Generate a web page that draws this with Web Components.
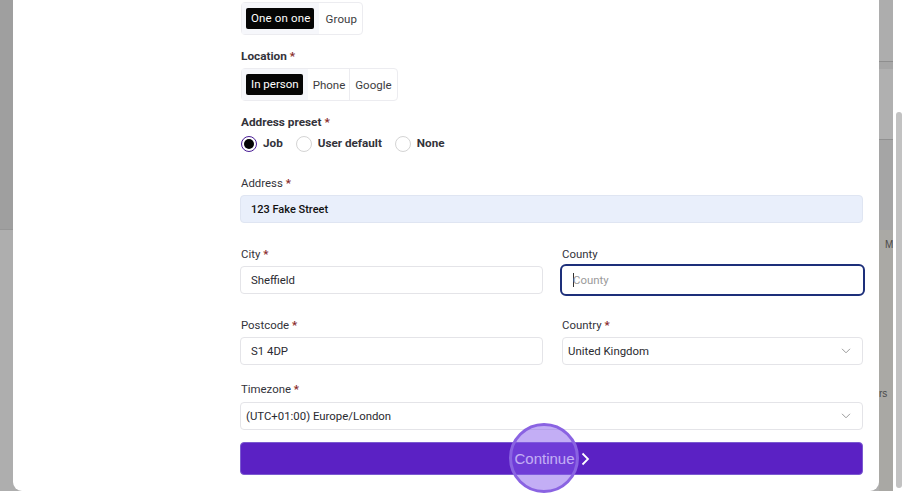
<!DOCTYPE html>
<html>
<head>
<meta charset="utf-8">
<style>
	html, body { margin: 0; padding: 0; background: #fff; }
	body { width: 904px; height: 504px; overflow: hidden; font-family: Roboto, "Liberation Sans", sans-serif; }
	.two { display: grid; grid-template-columns: 303px 301px; column-gap: 19px; margin-top: 24px; }
</style>
</head>
<body>

<template id="app-screen-tpl">
	<style>
		:host { display: flex; width: 904px; height: 504px; background: #fff; position: relative; }
		.backdrop { display: flex; width: 893px; height: 491px; background: #aeaeae; }
		.side { display: flex; flex-direction: column; flex: none; overflow: hidden; }
		.left { width: 13px; }
		.right { width: 14px; color: #4a4a4a; font: 10px "Liberation Sans", sans-serif; }
		.b { flex: none; box-sizing: border-box; }
		.modal { flex: 1; min-width: 0; background: #fff; border-radius: 0 0 9px 9px; }
		.bar { flex: none; width: 11px; height: 491px; display: flex; flex-direction: column; padding-top: 112px; box-sizing: border-box; align-items: flex-end; }
		.thumb { width: 6px; height: 376px; margin-right: 2px; background: #c2c2c2; border-radius: 3px; }
		.m { background: #aaa9a5; padding-top: 9px; height: 150px; padding-left: 6px; }
		.m2 { height: 111px; background: #a9a8a4; padding-top: 8px; line-height: 12px; white-space: nowrap; }
	</style>
	<div class="backdrop">
		<div class="side left">
			<div class="b" style="height:230px;background:#9f9f9f;border-bottom:1px solid #969696"></div>
			<div class="b" style="height:261px;background:#aeaeae"></div>
		</div>
		<div class="modal"><slot></slot></div>
		<div class="side right">
			<div class="b" style="height:61px;background:#adadad"></div>
			<div class="b" style="height:8px;background:#a6a6a6;border-top:1px solid #8e8e8e"></div>
			<div class="b" style="height:70px;background:#b0b0b0"></div>
			<div class="b" style="height:91px;background:#a5a5a5;border-top:1px solid #909090"></div>
			<div class="b m">M</div>
			<div class="b m2">rs</div>
		</div>
	</div>
	<div class="bar"><div class="thumb"></div></div>
	<slot name="overlay"></slot>
</template>

<template id="job-form-tpl">
	<style>
		:host { display: flex; flex-direction: column; box-sizing: border-box; height: 100%; padding: 2px 16px 0 227px; }
	</style>
	<slot></slot>
</template>

<template id="seg-group-tpl">
	<style>
		:host { display: inline-flex; align-self: flex-start; box-sizing: border-box; height: 33px; margin-left: 1px; border: 1px solid #ececf0; border-radius: 4px; background: #fff; }
	</style>
	<slot></slot>
</template>

<template id="seg-item-tpl">
	<style>
		:host { display: flex; align-items: center; padding: 0 5px; font-size: 11.5px; color: #3c3c40; border-left: 1px solid #ececf0; }
		:host([first]) { border-left: 0; background: #f6f7fb; padding: 0 4px 0 4px; }
		:host([first]) span { margin-right: 1px; }
		span { display: block; }
		:host([active]) span { background: #050505; color: #fff; padding: 0 4px 0 5px; line-height: 21px; border-radius: 2px; }
	</style>
	<span><slot></slot></span>
</template>

<template id="form-label-tpl">
	<style>
		:host { display: block; height: 16px; line-height: 14px; margin-left: 1px; font-size: 11.4px; color: #33333a; }
		:host([bold]) { font-size: 11.8px; font-weight: 700; }
		i { font-style: normal; font-weight: 700; color: #8a2b2b; }
	</style>
	<slot></slot><i id="req"> *</i>
</template>

<template id="radio-row-tpl">
	<style>
		:host { display: flex; align-items: flex-start; height: 18px; gap: 13px; margin-left: 1px; }
	</style>
	<slot></slot>
</template>

<template id="radio-opt-tpl">
	<style>
		:host { display: flex; gap: 6px; font-size: 11.7px; font-weight: 700; color: #33333a; line-height: 14px; }
		.dot { box-sizing: border-box; width: 16px; height: 16px; border-radius: 50%; border: 1.5px solid #d4d4d4; background: #fff; flex: none; }
		:host([checked]) .dot { border: 1.5px solid #4a1d96; padding: 2px; background: #050505 content-box; }
	</style>
	<div class="dot"></div><span><slot></slot></span>
</template>

<template id="text-box-tpl">
	<style>
		:host { display: flex; align-items: center; box-sizing: border-box; height: 28px; padding: 0 10px; margin-top: 3px; border: 1px solid #e4e4e8; border-radius: 4px; background: #fff; font-size: 11.4px; color: #2a2a30; position: relative; }
		:host([filled]) { background: #e9effb; border-color: #dfe5f2; font-size: 11px; font-weight: 500; color: #111; }
		:host([focused]) { outline: 2px solid #1d2f7a; border-color: #fff; color: #9a9a9a; }
		:host([select]) { padding: 0 11px 0 5px; justify-content: space-between; }
		:host([focused]) b { width: 1px; height: 14px; background: #333; flex: none; margin-right: -1px; }
		svg { flex: none; }
		.t { flex: 1; }
	</style>
	<b></b><span class="t"><slot></slot></span>
	<svg id="chev" width="10" height="6" viewBox="0 0 10 6" fill="none" stroke="#9a9a9a" stroke-width="1"><path d="M1 .8 5 4.8 9 .8"/></svg>
</template>

<template id="go-button-tpl">
	<style>
		:host { display: flex; align-items: center; justify-content: center; gap: 6px; box-sizing: border-box; height: 33px; margin-top: 12px; padding-left: 1px; background: #5b21c4; border: 1px solid #7b5ad0; border-radius: 4px; color: #fff; font: 15px "Liberation Sans", sans-serif; }
	</style>
	<span><slot></slot></span>
	<svg width="9" height="14" viewBox="0 0 9 14" fill="none" stroke="#fff" stroke-width="1.8"><path d="M1.5 1.5 7 7 1.5 12.5"/></svg>
</template>

<template id="click-spot-tpl">
	<style>
		:host { display: block; position: absolute; left: 509px; top: 423px; width: 70px; height: 70px; box-sizing: border-box; border-radius: 50%; border: 3px solid #8a63e2; background: rgba(132,90,235,.49); }
	</style>
</template>

<app-screen>
	<job-form>
		<seg-group style="letter-spacing:.15px">
			<seg-item first active>One on one</seg-item>
			<seg-item style="border-left:0;padding-left:6px">Group</seg-item>
		</seg-group>

		<form-label bold required style="margin-top:14px">Location</form-label>
		<seg-group style="margin-top:3px">
			<seg-item first active>In person</seg-item>
			<seg-item style="border-left:0;padding-right:4px">Phone</seg-item>
			<seg-item>Google</seg-item>
		</seg-group>

		<form-label bold required style="margin-top:14px">Address preset</form-label>
		<radio-row style="margin-top:5px">
			<radio-opt checked>Job</radio-opt>
			<radio-opt>User default</radio-opt>
			<radio-opt>None</radio-opt>
		</radio-row>

		<form-label required style="margin-top:22px">Address</form-label>
		<text-box filled>123 Fake Street</text-box>

		<div class="two">
			<div>
				<form-label required>City</form-label>
				<text-box>Sheffield</text-box>
			</div>
			<div>
				<form-label style="margin-left:0">County</form-label>
				<text-box focused>County</text-box>
			</div>
		</div>

		<div class="two">
			<div>
				<form-label required>Postcode</form-label>
				<text-box>S1 4DP</text-box>
			</div>
			<div>
				<form-label required style="margin-left:0">Country</form-label>
				<text-box select>United Kingdom</text-box>
			</div>
		</div>

		<form-label required style="margin-top:17px">Timezone</form-label>
		<text-box select style="margin-top:4px">(UTC+01:00) Europe/London</text-box>

		<go-button>Continue</go-button>
	</job-form>
	<click-spot slot="overlay"></click-spot>
</app-screen>

<script>
	function define(tag, tplId, init) {
		customElements.define(tag, class extends HTMLElement {
			constructor() {
				super();
				const shadow = this.attachShadow({mode: 'open'});
				shadow.appendChild(document.getElementById(tplId).content.cloneNode(true));
				if (init) init(this, shadow);
			}
		});
	}

	define('app-screen', 'app-screen-tpl');
	define('job-form', 'job-form-tpl');
	define('seg-group', 'seg-group-tpl');
	define('seg-item', 'seg-item-tpl');
	define('form-label', 'form-label-tpl', function(el, shadow) {
		if (!el.hasAttribute('required')) shadow.getElementById('req').remove();
	});
	define('radio-row', 'radio-row-tpl');
	define('radio-opt', 'radio-opt-tpl');
	define('text-box', 'text-box-tpl', function(el, shadow) {
		if (!el.hasAttribute('select')) shadow.getElementById('chev').remove();
	});
	define('go-button', 'go-button-tpl');
	define('click-spot', 'click-spot-tpl');
</script>
</body>
</html>
